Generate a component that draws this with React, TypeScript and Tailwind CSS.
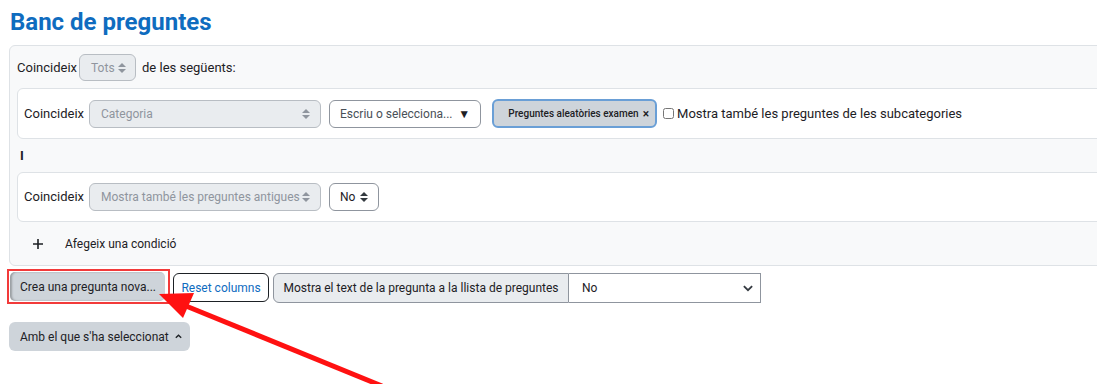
import React from 'react';

function UpDown({ color = '#343a40' }: { color?: string }) {
  return (
    <svg width="8" height="10" viewBox="0 0 4 5" className="shrink-0">
      <path d="M2 0L0 2h4zm0 5L0 3h4z" fill={color} />
    </svg>
  );
}

function DisabledSelect({ label, width }: { label: string; width: string }) {
  return (
    <div
      className={`${width} shrink-0 h-[28px] flex items-center justify-between pl-[11px] pr-[10px] bg-[#e9ecef] border border-[#b8bdc3] rounded-[6px] text-[#8f959e] text-[12px]`}
    >
      <span className="whitespace-nowrap">{label}</span>
      <UpDown color="#8f959e" />
    </div>
  );
}

function ConditionCard({ children }: { children: React.ReactNode }) {
  return (
    <div className="bg-white border border-[#dee2e6] rounded-[6px] px-[6px] py-[10px] flex items-center whitespace-nowrap">
      <span className="text-[13px] mr-[5px]">Coincideix</span>
      {children}
    </div>
  );
}

export default function App() {
  return (
    <div
      className="relative w-[1097px] h-[384px] overflow-hidden bg-white text-[#1d2125] whitespace-nowrap"
      style={{ fontFamily: 'Roboto, "Liberation Sans", sans-serif' }}
    >
      <div className="pl-[10px] pt-[8px]">
        <h2 className="text-[24px] leading-[29px] font-bold text-[#0f6cbf]">Banc de preguntes</h2>
      </div>

      <div className="mt-[8px] ml-[9px] w-[1110px] bg-[#f8f9fa] border border-[#dee2e6] rounded-[6px] pl-[7px] pt-[8px] pb-[11px]">
        <div className="flex items-center text-[13px]">
          <span className="mr-[2px]">Coincideix</span>
          <div className="w-[57px] h-[27px] flex items-center justify-between pl-[11px] pr-[9px] bg-[#e9ecef] border border-[#b8bdc3] rounded-[6px] text-[12px] text-[#8f959e]">
            <span>Tots</span>
            <UpDown color="#8f959e" />
          </div>
          <span className="ml-[6px]">de les següents:</span>
        </div>

        <div className="mt-[7px]">
          <ConditionCard>
            <DisabledSelect label="Categoria" width="w-[232px]" />
            <div className="ml-[8px] shrink-0 w-[152px] h-[28px] flex items-center justify-between pl-[10px] pr-[10px] bg-white border border-[#8f959e] rounded-[6px] text-[12px] text-[#495057]">
              <span>Escriu o selecciona...</span>
              <span className="text-[#1d2125] text-[12px]">▼</span>
            </div>
            <div className="ml-[11px] shrink-0 w-[165px] h-[29px] flex items-center justify-end pr-[6px] bg-[#ced4da] border-2 border-[#6a9fd6] rounded-[6px] text-[10px] font-medium text-[#1d2125]">
              <span>Preguntes aleatòries examen</span>
              <span className="ml-[4px] text-[12px]">×</span>
            </div>
            <input type="checkbox" className="ml-[6px] w-[11px] h-[11px] mr-[3px]" readOnly />
            <span className="text-[13px]">Mostra també les preguntes de les subcategories</span>
          </ConditionCard>
        </div>

        <div className="h-[33px] flex items-center pl-[3px] text-[13px] font-bold">I</div>

        <ConditionCard>
          <DisabledSelect label="Mostra també les preguntes antigues" width="w-[232px]" />
          <div className="ml-[8px] shrink-0 w-[50px] h-[28px] flex items-center justify-between pl-[10px] pr-[10px] bg-white border border-[#8f959e] rounded-[6px] text-[12px]">
            <span>No</span>
            <UpDown />
          </div>
        </ConditionCard>

        <div className="mt-[12px] flex items-center h-[20px] text-[12px]">
          <svg width="12" height="12" viewBox="0 0 12 12" className="ml-[15px]">
            <path d="M6 1v10M1 6h10" stroke="#1d2125" strokeWidth="1.6" />
          </svg>
          <span className="ml-[21px]">Afegeix una condició</span>
        </div>
      </div>

      <div className="mt-[3px] ml-[7px] flex items-start">
        <div className="border-2 border-[#f23a3a] p-[1px] pr-[3px]">
          <div className="h-[29px] w-[155px] flex items-center pl-[10px] bg-[#ced4da] rounded-[5px] text-[12px] shadow-[inset_2px_0_2px_rgba(0,0,0,0.25)]">
            Crea una pregunta nova...
          </div>
        </div>
        <div className="mt-[4px] ml-[3px] h-[29px] w-[96px] flex items-center justify-center bg-white border border-[#1d2125] rounded-[6px] text-[12px] text-[#0f6cbf]">
          Reset columns
        </div>
        <div className="mt-[4px] ml-[4px] flex">
          <div className="h-[30px] w-[296px] flex items-center justify-center bg-[#e9ecef] border border-[#8f959e] rounded-l-[6px] text-[12px]">
            Mostra el text de la pregunta a la llista de preguntes
          </div>
          <div className="h-[30px] w-[192px] flex items-center justify-between pl-[13px] pr-[6px] bg-white border border-[#8f959e] border-l-0 text-[12px]">
            <span>No</span>
            <svg width="12" height="12" viewBox="0 0 16 16">
              <path d="M2.5 5.5l5.5 5.5 5.5-5.5" stroke="#343a40" strokeWidth="2.4" fill="none" />
            </svg>
          </div>
        </div>
      </div>

      <div className="mt-[18px] ml-[9px] h-[29px] w-[181px] flex items-center pl-[11px] bg-[#ced4da] rounded-[6px] text-[12px]">
        Amb el que s'ha seleccionat
        <svg width="9" height="9" viewBox="0 0 10 10" className="ml-[5px]">
          <path d="M2 6.5l3-3 3 3" stroke="#1d2125" strokeWidth="1.5" fill="none" />
        </svg>
      </div>

      <svg className="absolute left-0 top-0 pointer-events-none" width="1097" height="384">
        <line x1="382" y1="386" x2="186" y2="306" stroke="#ff1111" strokeWidth="5" />
        <polygon points="159,294 194,293 183,318" fill="#ff1111" />
      </svg>
    </div>
  );
}
